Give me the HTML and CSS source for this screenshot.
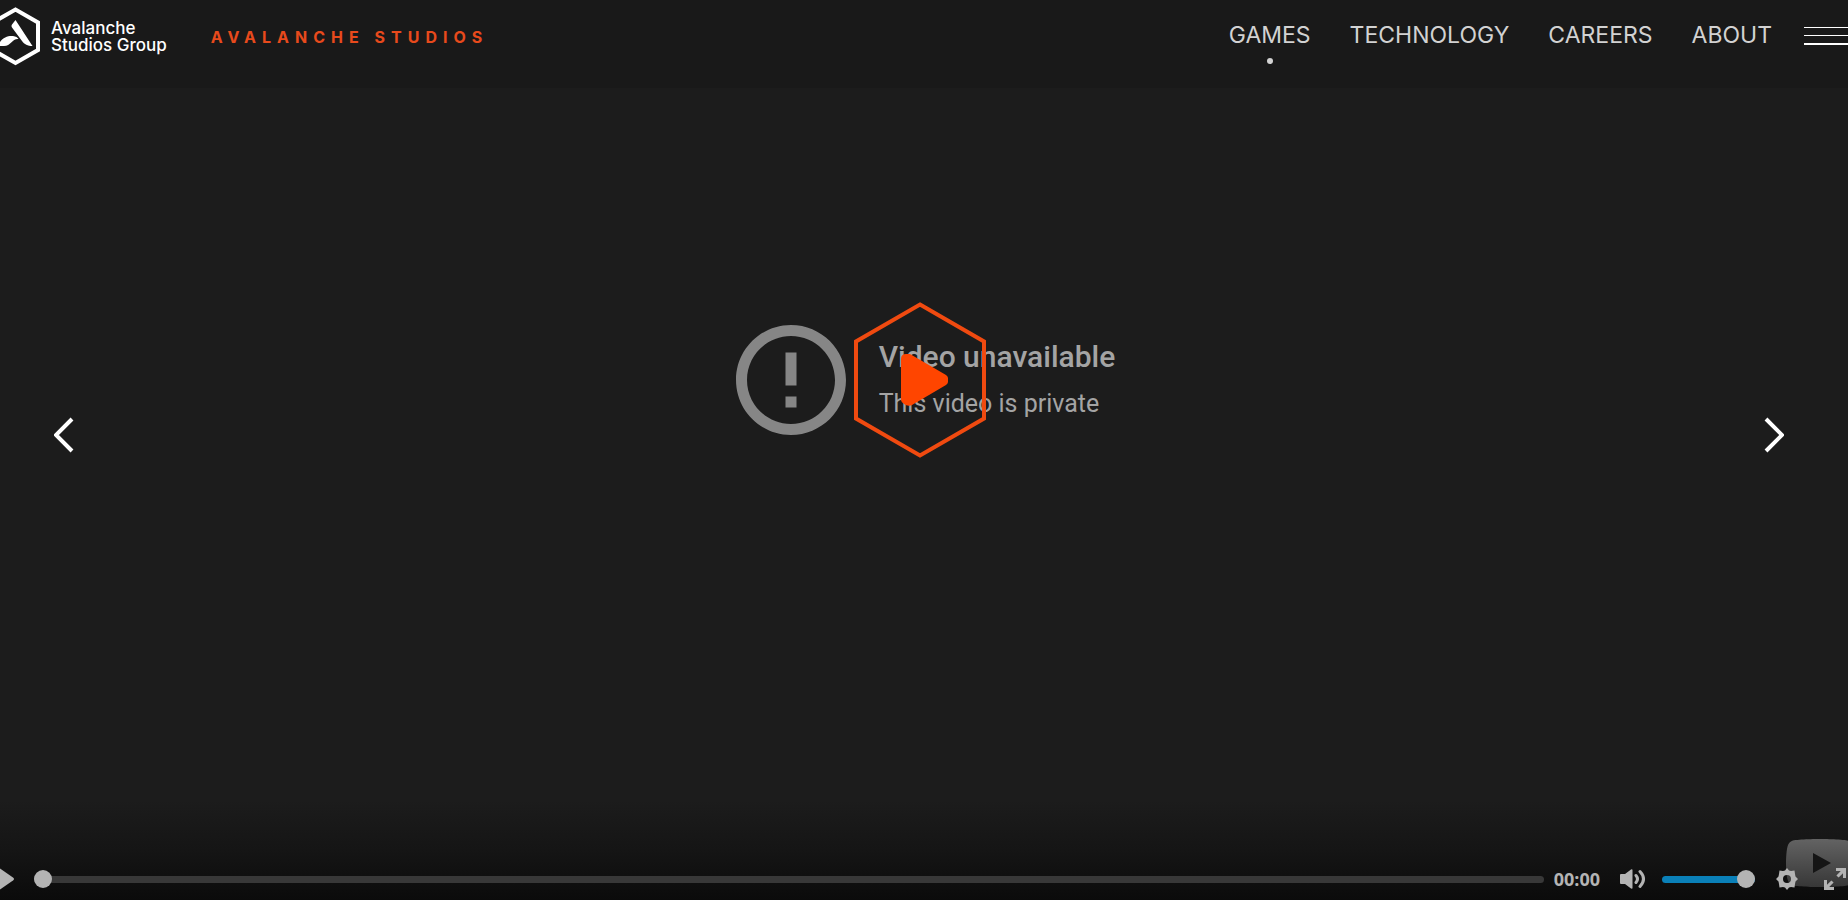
FILE: index.html
```
<!DOCTYPE html>
<html lang="en">
<head>
  <meta charset="UTF-8" />
  <meta name="viewport" content="width=device-width, initial-scale=1.0"/>
  <title>Avalanche Studios Group</title>

  <link rel="stylesheet" href="styles.css">
</head>
<body>

  <header class="header">
    <a href="#" class="logo">
      <svg class="logo-mark" viewBox="0 0 40 60" width="40" height="60">
        <path d="M-8 17 L15.500 3.500 L38 16.500 V44 L15.500 57 L-8 43.500 Z" fill="none" stroke="#fff" stroke-width="4"/>
        <path d="M15.500 14 L32.500 40 C27.500 40 24.500 38.500 22 35 L12 21.500 Q11 20 12 18.500 Z M-2 40 C1 32 7 29.500 13 30 C16 30.300 17.500 31.500 18.500 33 C12 32.500 11 40 4 40 Z" fill="#fff"/>
      </svg>
      <span class="logo-text">Avalanche<br>Studios Group</span>
    </a>
    <a href="#" class="division">AVALANCHE STUDIOS</a>

    <nav class="nav">
      <a href="#" class="active">GAMES</a>
      <a href="#">TECHNOLOGY</a>
      <a href="#">CAREERS</a>
      <a href="#">ABOUT</a>
    </nav>
    <button class="menu-btn" aria-label="Menu">
      <span></span>
      <span></span>
      <span></span>
    </button>
  </header>

  <main class="player">
    <div class="video">
      <div class="error">
        <svg class="error-icon" viewBox="0 0 24 24">
          <path d="M11 15h2v2h-2zm0-8h2v6h-2zm.99-5C6.470 2 2 6.480 2 12s4.470 10 9.990 10C17.520 22 22 17.520 22 12S17.520 2 11.990 2zM12 20c-4.420 0-8-3.580-8-8s3.580-8 8-8 8 3.580 8 8-3.580 8-8 8z"/>
        </svg>
        <div class="error-text">
          <h1>Video unavailable</h1>
          <p>This video is private</p>
        </div>
        <button class="play-big" aria-label="Play video">
          <svg viewBox="0 0 132 156" width="132" height="156">
            <path d="M66 2.500 L130 39.500 V116.500 L66 153.500 L2 116.500 V39.500 Z" fill="none" stroke="#f04a10" stroke-width="4"/>
            <path d="M47 57 Q47 52 52 52 H56 L92 73 Q94 74.500 94 76 V80 Q94 81.500 92 83 L58 103 Q54 105 50 102 Q47 100 47 98 Z" fill="#ff4500"/>
          </svg>
        </button>
      </div>
    </div>

    <button class="arrow prev" aria-label="Previous">
      <svg viewBox="0 0 20 36" width="20" height="36"><path d="M18 2 L2 18 L18 34"/></svg>
    </button>
    <button class="arrow next" aria-label="Next">
      <svg viewBox="0 0 20 36" width="20" height="36"><path d="M2 2 L18 18 L2 34"/></svg>
    </button>

    <div class="controls">
      <svg class="yt-logo" viewBox="0 0 68 48" width="68" height="48">
        <defs>
          <linearGradient id="ytFade" x1="0" y1="0" x2="0" y2="1">
            <stop offset="0" stop-color="#636363"/>
            <stop offset="1" stop-color="#373737"/>
          </linearGradient>
        </defs>
        <path d="M66.520 7.740c-.78-2.930-2.490-5.410-5.420-6.190C55.790.130 34 0 34 0S12.210.130 6.900 1.550C3.970 2.330 2.270 4.810 1.480 7.740.060 13.050 0 24 0 24s.060 10.950 1.480 16.260c.78 2.930 2.490 5.410 5.420 6.190C12.210 47.870 34 48 34 48s21.790-.130 27.100-1.550c2.930-.78 4.640-3.260 5.420-6.190C67.940 34.950 68 24 68 24s-.060-10.950-1.480-16.260z" fill="url(#ytFade)"/>
        <path d="M45 24 27 14v20" fill="#151515"/>
      </svg>

      <button class="ctrl play" aria-label="Play">
        <svg viewBox="0 0 14 22" width="14" height="22"><path d="M0 0.500 L13 9.500 Q15 11 13 12.500 L0 21.500 Z"/></svg>
      </button>
      <input type="range" class="seek" min="0" max="100" value="0" aria-label="Seek" />
      <span class="time">00:00</span>
      <button class="ctrl mute" aria-label="Mute">
        <svg viewBox="0 0 26 20" width="26" height="20">
          <path d="M0 6 Q0 5 1 5 H5 L11 0.500 Q12.500 0 12.500 1 V19 Q12.500 20 11 19.500 L5 15 H1 Q0 15 0 14 Z"/>
          <path class="wave" d="M16 6.500 Q19 10 16 13.500 M20 2.500 Q27 10 20 17.500"/>
        </svg>
      </button>
      <input type="range" class="volume" min="0" max="100" value="100" aria-label="Volume" />
      <button class="ctrl settings" aria-label="Settings">
        <svg viewBox="0 0 22 22" width="22" height="22">
          <path fill-rule="evenodd" d="M9 2.500 L11 0 L13 2.500 L15 3 L18.500 2.500 L19 6 L19.500 8.500 L22 11 L19.500 13.500 L19 16 L18.500 19.500 L15 19 L13 19.500 L11 22 L9 19.500 L7 19 L3.500 19.500 L3 16 L2.500 13.500 L0 11 L2.500 8.500 L3 6 L3.500 2.500 L7 3 Z M11 7 A4 4 0 1 0 11 15 A4 4 0 1 0 11 7 Z"/>
        </svg>
      </button>
      <button class="ctrl fullscreen" aria-label="Enter fullscreen">
        <svg viewBox="0 0 22 22" width="22" height="22">
          <path d="M12 0 H22 V10 H19 V5.200 L14.600 9.600 L12.400 7.400 L16.800 3 H12 Z M10 22 H0 V12 H3 V16.800 L7.400 12.400 L9.600 14.600 L5.200 19 H10 Z"/>
        </svg>
      </button>
    </div>
  </main>

</body>
</html>
```

FILE: styles.css
```
* {
  margin: 0;
  padding: 0;
  box-sizing: border-box;
}

body {
  min-height: 100vh;
  display: flex;
  flex-direction: column;
  background: #1c1c1c;
  color: #d2d2d2;
  font-family: Inter, "Liberation Sans", sans-serif;
  overflow-x: hidden;
}

a {
  color: inherit;
  text-decoration: none;
}

button {
  background: none;
  border: none;
  cursor: pointer;
}

svg {
  display: block;
}

/* header */
.header {
  height: 88px;
  display: flex;
  align-items: flex-start;
  background: #191919;
}

.logo {
  display: flex;
  gap: 11px;
  margin-top: 6px;
  color: #fff;
}

.logo-text {
  margin-top: 14px;
  font-size: 17px;
  font-weight: 500;
  line-height: 17px;
  white-space: nowrap;
}

.division {
  margin: 27px 0 0 44px;
  color: #e84a1c;
  font-size: 16px;
  font-weight: 700;
  line-height: 20px;
  letter-spacing: 6px;
  white-space: nowrap;
}

.nav {
  display: flex;
  gap: 39px;
  margin: 21px 32px 0 auto;
  font-size: 23px;
  line-height: 28px;
}

.nav a.active::after {
  content: "";
  display: block;
  width: 6px;
  height: 6px;
  margin: 9px auto 0;
  border-radius: 50%;
  background: #d2d2d2;
}

.menu-btn {
  width: 44px;
  margin-top: 27px;
}

.menu-btn span {
  display: block;
  height: 1px;
  margin-bottom: 7px;
  background: #fff;
}

.menu-btn span:last-child {
  height: 2px;
  margin: 0;
}

/* player */
.player {
  position: relative;
  flex: 1;
  display: flex;
  flex-direction: column;
}

.video {
  flex: 1;
  display: flex;
  align-items: center;
  justify-content: center;
  padding: 0 8px 128px 0;
}

.error {
  position: relative;
  display: flex;
  align-items: center;
  gap: 22px;
  color: #a4a4a4;
  font-family: Roboto, "Liberation Sans", sans-serif;
}

.error-icon {
  width: 132px;
  height: 132px;
  fill: #868686;
}

.error-text h1 {
  font-size: 30px;
  font-weight: 500;
  line-height: 48px;
}

.error-text p {
  font-size: 25px;
  line-height: 46px;
}

.play-big {
  position: absolute;
  top: 50%;
  left: 50%;
  transform: translate(-50%, -50%);
}

.arrow {
  position: absolute;
  top: 329px;
}

.arrow path {
  fill: none;
  stroke: #fff;
  stroke-width: 4;
}

.prev {
  left: 54px;
}

.next {
  right: 64px;
}

/* controls */
.controls {
  position: relative;
  height: 100px;
  display: flex;
  align-items: center;
  padding-top: 58px;
  background: linear-gradient(#1c1c1c, #151515 50%, #0b0b0b);
}

.controls > * {
  position: relative;
}

.ctrl {
  fill: #b4b4b4;
}

.ctrl .wave {
  fill: none;
  stroke: #b4b4b4;
  stroke-width: 3;
  stroke-linecap: round;
}

.controls .yt-logo {
  position: absolute;
  top: 39px;
  right: -6px;
}

.time {
  margin: 0 20px 0 10px;
  color: #b4b4b4;
  font-family: "Open Sans", "Liberation Sans", sans-serif;
  font-size: 18px;
  font-weight: 700;
}

input[type="range"] {
  appearance: none;
  height: 18px;
  background: none;
  cursor: pointer;
}

input[type="range"]::-webkit-slider-runnable-track {
  height: 7px;
  border-radius: 4px;
  background: #383838;
}

input[type="range"]::-webkit-slider-thumb {
  appearance: none;
  width: 18px;
  height: 18px;
  margin-top: -6px;
  border-radius: 50%;
  background: #b4b4b4;
}

.seek {
  flex: 1;
  min-width: 0;
  margin-left: 20px;
}

.volume {
  width: 93px;
  margin: 0 21px 0 16px;
}

input.volume::-webkit-slider-runnable-track {
  background: #0a80b8;
}

.fullscreen {
  margin: 0 2px 0 26px;
}
```
